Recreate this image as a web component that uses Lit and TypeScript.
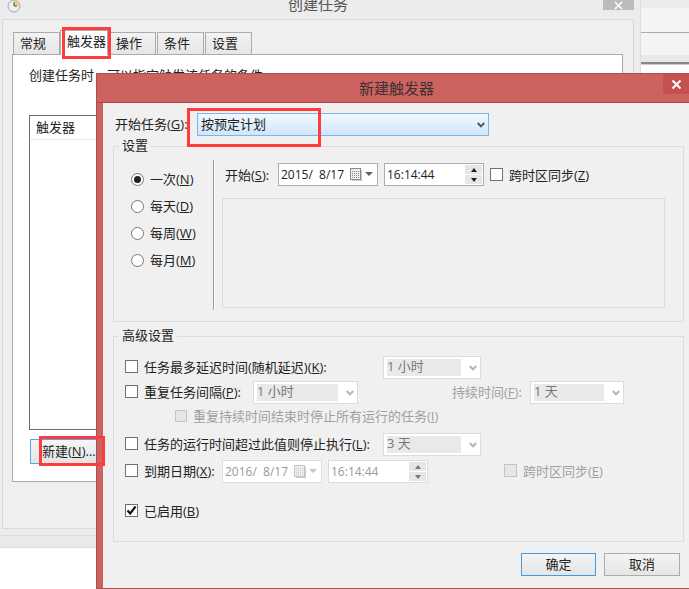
import { LitElement, html, css, svg } from "lit";
import { customElement } from "lit/decorators.js";

const mn = (t: string, k: string, tail = "") => html`${t}(<u>${k}</u>)${tail}`;

const chevron = (c = "#b4b4b4") => html`<svg class="chev" width="8" height="6" viewBox="0 0 8 6"><path d="M0.8 1 L4 4.4 L7.2 1" fill="none" stroke="${c}" stroke-width="2"/></svg>`;

const calendar = (on: boolean) => html`<svg class="cal" width="24" height="14" viewBox="0 0 24 14">
  <rect x="0.5" y="0.5" width="10" height="11" fill="#eee" stroke="${on ? "#8a8a8a" : "#c4c4c4"}"/>
  <rect x="11" y="2" width="1" height="11" fill="#ccc"/><rect x="2" y="12" width="10" height="1" fill="#ccc"/>
  ${[3, 5, 7, 9].map((y) => [2, 4, 6, 8].map((x) => svg`<rect x="${x}" y="${y}" width="1" height="1" fill="${on ? "#888" : "#ccc"}"/>`))}
  <path d="M15 4 H23 L19 8 Z" fill="${on ? "#56647f" : "#c6c6c6"}"/></svg>`;

const spin = (on: boolean) => html`<span class="spin ${on ? "" : "off"}"><i><b class="up"></b></i><i><b class="dn"></b></i></span>`;

@customElement("app-root")
export class AppRoot extends LitElement {
  static styles = css`
    :host { display: block; position: relative; width: 689px; height: 589px; overflow: hidden; background: #fff;
      font: 13px/18px "Open Sans", "Noto Sans CJK SC", sans-serif; color: #222; }
    * { box-sizing: border-box; }
    u { text-underline-offset: 1px; }

    .back { position: absolute; left: 0; top: 0; width: 641px; height: 548px; background: #ececec; border-right: 1px solid #ddd; display: flex; flex-direction: column; }
    .back-title { position: relative; display: flex; justify-content: center; margin-top: -5px; height: 19px; flex: none; color: #555; font-size: 15px; padding-right: 4px; }
    .clock { position: absolute; left: 7px; top: 4px; }
    .back-close { position: absolute; left: 603px; top: 0; width: 31px; height: 15px; background: #bbb; color: #fff; display: flex; align-items: flex-end; justify-content: center; }
    .panel { margin-left: 2px; width: 632px; height: 510px; flex: none; margin-top: 5px; border: 1px solid #d9d9d9; background: #efefef; padding: 12px 0 0 9px; }
    .tabs { display: flex; height: 22px; align-items: flex-end; gap: 1px; margin-left: 1px; }
    .tab { width: 47px; height: 22px; border: 1px solid #acacac; border-bottom: 0; background: linear-gradient(#f2f2f2, #e6e6e6); padding-left: 6px; line-height: 21px; }
    .tab.on { background: #fff; height: 25px; margin-bottom: -1px; position: relative; z-index: 1; width: 48px; margin-left: -1px; }
    .sheet { width: 611px; height: 428px; border: 1px solid #acacac; background: #fff; padding: 11px 0 0 16px; }
    .list { margin-top: 31px; width: 500px; height: 315px; border: 1px solid #6e6e6e; }
    .list-head { height: 24px; padding: 2px 0 0 6px; border-bottom: 1px solid #eee; }
    .new { margin: 9px 0 0 1px; width: 75px; height: 25px; border: 1px solid #5aa6ea; background: linear-gradient(#f5f5f5, #e4e4e4); padding-left: 11px; line-height: 23px; }
    .strip { flex: none; margin-top: 6px; height: 13px; background: #e9e9e9; border-top: 1px solid #ddd; border-bottom: 1px solid #ddd; }

    .side { position: absolute; left: 641px; top: 0; width: 48px; height: 73px; background: #fff; display: flex; flex-direction: column; }
    .side .a { height: 8px; background: #ececec; }
    .side .b { height: 25px; background: #f3f4f6; border-bottom: 1px solid #aaa; }
    .side .c { height: 22px; background: #f3f4f6; }
    .side .d { height: 7px; background: #e9e9e9; }
    .side .e { height: 3px; background: #888; border-bottom: 1px solid #ccc; }

    .dlg { position: absolute; left: 96px; top: 73px; width: 600px; height: 516px; background: #cc6360; border: 1px solid #a8504d; border-right: 0; display: flex; flex-direction: column; }
    .dlg-title { flex: none; height: 29px; border-bottom: 1px solid #b5494a; text-align: center; padding: 5px 0 0 6px; width: 593px; font-size: 15px; color: #3c3030; position: relative; }
    .dlg-close { position: absolute; left: 566px; top: 0; width: 27px; height: 20px; background: #c64f50; display: flex; align-items: center; justify-content: center; }
    .body { flex: none; margin-left: 6px; width: 586px; height: 485px; background: #f0f0f0; padding-top: 10px; }
    .start { display: flex; height: 23px; align-items: center; }
    .start label { width: 94px; padding: 0 0 2px 12px; }
    .sel { width: 292px; height: 23px; border: 1px solid #7eb4ea; background: linear-gradient(#f1f8fe, #cfe6fc); display: flex; align-items: center; justify-content: space-between; padding: 0 3px 0 3px; }
    .sel span { padding-bottom: 2px; }
    fieldset { margin: 1px 0 0 10px; width: 571px; border: 1px solid #dcdcdc; padding: 0; min-width: 0; }
    legend { margin-left: 5px; padding: 0 3px 2px; line-height: 16px; }
    .once { display: flex; padding: 5px 0 10px; height: 166px; }
    .radios { width: 99px; padding: 6px 0 0 17px; }
    .radio { display: flex; align-items: center; height: 27px; gap: 6px; }
    .radio span { padding-bottom: 2px; }
    .dot { width: 13px; height: 13px; border: 1px solid #777; border-radius: 50%; background: #fff; display: flex; align-items: center; justify-content: center; }
    .dot i { width: 7px; height: 7px; border-radius: 50%; background: #222; }
    .sep { width: 2px; height: 150px; background: #999; border-right: 1px solid #fff; }
    .right { margin-left: 7px; }
    .line { display: flex; align-items: center; margin-top: 3px; height: 23px; }
    .line label { width: 56px; padding-left: 3px; }
    .field { height: 23px; width: 100px; background: #fff; border: 1px solid #acacac; display: flex; align-items: center; justify-content: space-between; padding: 0 2px; font-size: 12px; white-space: pre; }
    .field.off { border-color: #dcdcdc; color: #999; }
    .ml { margin-left: 6px; }
    .cb { flex: none; width: 13px; height: 13px; border: 1px solid #707070; background: #fff; display: flex; align-items: center; justify-content: center; }
    .cb.off { background: #e6e6e6; border-color: #c4c4c4; }
    .pad { margin-left: 6px; }
    .box { margin-top: 12px; width: 443px; height: 110px; border: 1px solid #dcdcdc; }
    .spin { display: flex; flex-direction: column; gap: 1px; width: 17px; margin-right: -1px; }
    .spin i { height: 9px; background: #e6e6e6; display: flex; align-items: center; justify-content: center; }
    .spin b { width: 0; height: 0; border-left: 3px solid transparent; border-right: 3px solid transparent; }
    .spin .up { border-bottom: 4px solid #222; }
    .spin .dn { border-top: 4px solid #222; }
    .spin.off b { border-top-color: #777; border-bottom-color: #777; }
    .cal { margin-right: 1px; }

    .adv { margin-top: 5px; height: 215px; }
    .advin { padding: 11px 0 0 11px; }
    .row { display: flex; align-items: center; height: 23px; }
    .row > .cb { margin-bottom: 2px; }
    .row .t, .row .dur { white-space: nowrap; padding-bottom: 2px; }
    .row .t { margin-left: 6px; }
    .r2, .r3 { margin-top: 2px; }
    .r4 { margin-top: 5px; }
    .r5 { margin-top: 4px; }
    .r6 { margin-top: 17px; }
    .r3 { height: 22px; padding-left: 50px; }
    .r3 .small { width: 12px; height: 12px; }
    .w239 { width: 239px; } .w109 { width: 109px; } .w78 { width: 78px; }
    .grey { color: #a0a0a0; }
    .dd { height: 23px; border: 1px solid #dcdcdc; background: #fff; display: flex; align-items: center; justify-content: space-between; padding: 0 3px 0 3px; color: #777; }
    .dd span { height: 17px; flex: 1; margin-right: 8px; background: #e9e9e9; padding-left: 0; line-height: 15px; white-space: pre; }
    .w98 { width: 98px; } .w105 { width: 105px; } .w94 { width: 94px; }
    .dur { margin-left: 94px; width: 78px; }
    .gap76 { margin-left: 76px; }
    .foot { display: flex; justify-content: flex-end; gap: 8px; padding: 11px 9px 0 0; }
    .btn { height: 23px; background: linear-gradient(#f4f4f4, #e5e5e5); border: 1px solid #acacac; text-align: center; line-height: 20px; width: 76px; }
    .btn.def { border-color: #3e9ce8; width: 75px; }

    .mark { position: absolute; border: 3px solid #ff3b3b; z-index: 5; }
    .m1 { left: 62px; top: 27px; width: 49px; height: 32px; }
    .m2 { left: 187px; top: 108px; width: 134px; height: 39px; }
    .m3 { left: 39px; top: 436px; width: 66px; height: 30px; }
  `;

  render() {
    return html`
      <div class="back">
        <div class="back-title">
          <svg class="clock" width="14" height="14" viewBox="0 0 14 14"><circle cx="7" cy="7" r="6" fill="#eee" stroke="#9aa" /><path d="M7 1 A6 6 0 0 1 13 7 L7 7 Z" fill="#eccb8a"/><path d="M7 3 V7 H10" stroke="#456" fill="none"/></svg>
          创建任务
          <div class="back-close"><svg width="9" height="9" viewBox="0 0 9 9"><path d="M1 1 L8 8 M8 1 L1 8" stroke="#fff" stroke-width="1.6"/></svg></div>
        </div>
        <div class="panel">
          <div class="tabs">
            <div class="tab">常规</div>
            <div class="tab on">触发器</div>
            <div class="tab">操作</div>
            <div class="tab">条件</div>
            <div class="tab">设置</div>
          </div>
          <div class="sheet">
            <div>创建任务时，可以指定触发该任务的条件。</div>
            <div class="list"><div class="list-head">触发器</div></div>
            <div class="new">${mn("新建", "N", "...")}</div>
          </div>
        </div>
        <div class="strip"></div>
      </div>

      <div class="side"><div class="a"></div><div class="b"></div><div class="c"></div><div class="d"></div><div class="e"></div></div>

      <div class="dlg">
        <div class="dlg-title">新建触发器
          <div class="dlg-close"><svg width="11" height="11" viewBox="0 0 11 11"><path d="M1.5 1.5 L9.5 9.5 M9.5 1.5 L1.5 9.5" stroke="#fff" stroke-width="2"/></svg></div>
        </div>
        <div class="body">
          <div class="start">
            <label>${mn("开始任务", "G", ":")}</label>
            <div class="sel"><span>按预定计划</span>${chevron("#555")}</div>
          </div>
          <fieldset>
            <legend>设置</legend>
            <div class="once">
              <div class="radios">
                <div class="radio"><div class="dot"><i></i></div><span>${mn("一次", "N")}</span></div>
                <div class="radio"><div class="dot"></div><span>${mn("每天", "D")}</span></div>
                <div class="radio"><div class="dot"></div><span>${mn("每周", "W")}</span></div>
                <div class="radio"><div class="dot"></div><span>${mn("每月", "M")}</span></div>
              </div>
              <div class="sep"></div>
              <div class="right">
                <div class="line">
                  <label>${mn("开始", "S", ":")}</label>
                  <div class="field">2015/  8/17${calendar(true)}</div>
                  <div class="field ml">16:14:44${spin(true)}</div>
                  <div class="cb ml"></div>
                  <div class="pad">${mn("跨时区同步", "Z")}</div>
                </div>
                <div class="box"></div>
              </div>
            </div>
          </fieldset>
          <fieldset class="adv">
            <legend>高级设置</legend>
            <div class="advin">
              <div class="row">
                <div class="cb"></div><div class="t w239">${mn("任务最多延迟时间(随机延迟)", "K", ":")}</div>
                <div class="dd w98"><span>1 小时</span>${chevron()}</div>
              </div>
              <div class="row r2">
                <div class="cb"></div><div class="t w109">${mn("重复任务间隔", "P", ":")}</div>
                <div class="dd w105"><span>1 小时</span>${chevron()}</div>
                <div class="dur grey">${mn("持续时间", "F", ":")}</div>
                <div class="dd w94"><span>1 天</span>${chevron()}</div>
              </div>
              <div class="row r3">
                <div class="cb off small"></div><div class="t grey">${mn("重复持续时间结束时停止所有运行的任务", "I")}</div>
              </div>
              <div class="row r4">
                <div class="cb"></div><div class="t w239">${mn("任务的运行时间超过此值则停止执行", "L", ":")}</div>
                <div class="dd w98"><span>3 天</span>${chevron()}</div>
              </div>
              <div class="row r5">
                <div class="cb"></div><div class="t w78">${mn("到期日期", "X", ":")}</div>
                <div class="field off">2016/  8/17${calendar(false)}</div>
                <div class="field off ml">16:14:44${spin(false)}</div>
                <div class="cb off gap76"></div><div class="t grey">${mn("跨时区同步", "E")}</div>
              </div>
              <div class="row r6">
                <div class="cb"><svg width="11" height="11" viewBox="0 0 11 11"><path d="M1.5 5.5 L4.2 8.5 L9.5 1.5" fill="none" stroke="#111" stroke-width="2.2"/></svg></div>
                <div class="t">${mn("已启用", "B")}</div>
              </div>
            </div>
          </fieldset>
          <div class="foot">
            <div class="btn def">确定</div>
            <div class="btn">取消</div>
          </div>
        </div>
      </div>

      <div class="mark m1"></div>
      <div class="mark m2"></div>
      <div class="mark m3"></div>
    `;
  }
}
